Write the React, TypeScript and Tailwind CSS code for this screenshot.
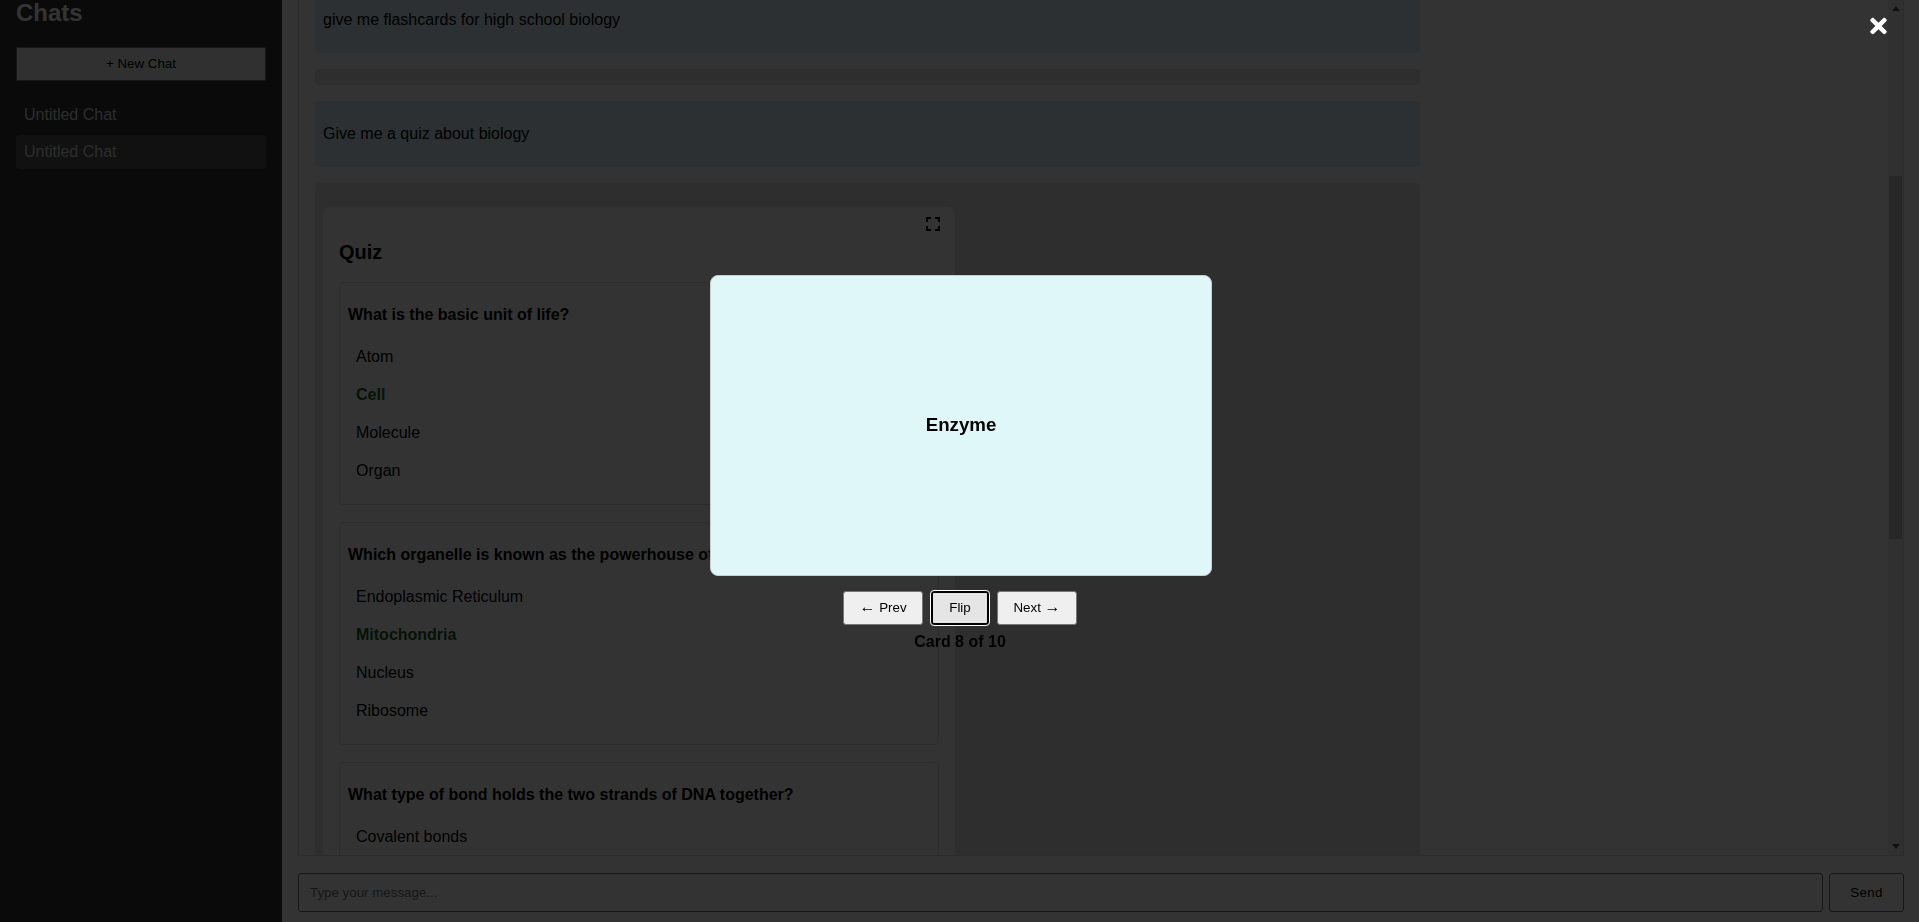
import { FaTimes } from "react-icons/fa";

interface Question {
  text: string;
  options: string[];
  answer: string;
}

const questions: Question[] = [
  {
    text: "What is the basic unit of life?",
    options: ["Atom", "Cell", "Molecule", "Organ"],
    answer: "Cell",
  },
  {
    text: "Which organelle is known as the powerhouse of the cell?",
    options: ["Endoplasmic Reticulum", "Mitochondria", "Nucleus", "Ribosome"],
    answer: "Mitochondria",
  },
  {
    text: "What type of bond holds the two strands of DNA together?",
    options: ["Covalent bonds"],
    answer: "",
  },
];

export default function App() {
  return (
    <div className="relative flex h-[922px] w-full overflow-hidden bg-white font-['Liberation_Sans',Arial,sans-serif] text-black">
      <Sidebar />
      <main className="flex min-w-0 flex-1 flex-col pr-[15px] pl-4">
        <Messages />
        <form className="mt-[17px] flex h-[39px] gap-[6px]">
          <input
            className="h-full flex-1 rounded-[3px] border border-[#767676] bg-white px-[11px] text-[13.33px] placeholder:text-[#757575]"
            placeholder="Type your message..."
            type="text"
          />
          <button
            type="button"
            className="h-full w-[75px] rounded-[3px] border border-[#767676] bg-white text-[13.33px] tracking-[0.4px]"
          >
            Send
          </button>
        </form>
      </main>
      <FlashcardModal />
    </div>
  );
}

function Sidebar() {
  return (
    <aside className="flex w-[282px] shrink-0 flex-col bg-[#333] px-4 text-white">
      <h2 className="-mt-[1px] h-[27px] text-2xl leading-[27px] font-bold">Chats</h2>
      <button
        type="button"
        className="mt-[21px] h-[34px] w-[250px] rounded-[1px] border border-[#767676] bg-[#efefef] text-[13.33px] text-black"
      >
        + New Chat
      </button>
      <div className="mt-[17px] flex h-[34px] items-center rounded-[4px] px-2 text-base text-[#ddd]">
        Untitled Chat
      </div>
      <div className="mt-[3px] flex h-[34px] items-center rounded-[4px] bg-[#555] px-2 text-base text-[#ddd]">
        Untitled Chat
      </div>
    </aside>
  );
}

function Messages() {
  return (
    <div className="flex h-[856px] border-r border-b border-l border-[#ddd]">
      <div className="min-w-0 flex-1 overflow-hidden pl-4">
        <div className="-mt-[13px] flex h-[66px] w-[1105px] items-center rounded-[4px] bg-[#d9f1f7] px-2 text-base leading-[18px]">
          give me flashcards for high school biology
        </div>
        <div className="mt-[16px] h-[16px] w-[1105px] rounded-[4px] bg-[#e6e6e6]" />
        <div className="mt-[16px] flex h-[66px] w-[1105px] items-center rounded-[4px] bg-[#d9f1f7] px-2 text-base leading-[18px]">
          Give me a quiz about biology
        </div>
        <div className="mt-[16px] w-[1105px] rounded-[4px] bg-[#e6e6e6] px-2 pt-[24px]">
          <QuizCard />
        </div>
      </div>
      <Scrollbar />
    </div>
  );
}

function QuizCard() {
  return (
    <div className="relative w-[632px] rounded-[8px] bg-white px-4 pt-[36px] pb-4">
      <button type="button" className="absolute top-[10px] right-[15px]">
        <ExpandIcon />
      </button>
      <h3 className="text-[20px] leading-[18px] font-bold">Quiz</h3>
      <div className="mt-[21px] flex flex-col gap-[17px]">
        {questions.map((question) => (
          <QuestionBlock key={question.text} question={question} />
        ))}
      </div>
    </div>
  );
}

function ExpandIcon() {
  return (
    <svg className="h-[14px] w-[14px]" viewBox="0 0 14 14" fill="none" stroke="#000" strokeWidth="2">
      <path d="M1 5V1H5M9 1H13V5M13 9V13H9M5 13H1V9" />
    </svg>
  );
}

function QuestionBlock({ question }: { question: Question }) {
  return (
    <div className="h-[223px] w-[600px] shrink-0 rounded-[4px] border border-[#ddd] px-2 pt-[23px]">
      <p className="text-base leading-[18px] font-bold">{question.text}</p>
      <ul className="mt-[14px] flex flex-col">
        {question.options.map((option) => (
          <li
            key={option}
            className={
              option === question.answer
                ? "flex h-[38px] items-center pl-2 text-base font-bold text-[#1b5e20]"
                : "flex h-[38px] items-center pl-2 text-base"
            }
          >
            {option}
          </li>
        ))}
      </ul>
    </div>
  );
}

function Scrollbar() {
  return (
    <div className="flex w-[15px] shrink-0 flex-col items-center bg-[#f1f1f1]">
      <svg className="mt-[6px] h-[5px] w-[8px]" viewBox="0 0 8 5">
        <path d="M4 0 8 5H0z" fill="#505050" />
      </svg>
      <div className="mt-[165px] h-[363px] w-[13px] bg-[#c1c1c1]" />
      <div className="flex-1" />
      <svg className="mb-[6px] h-[5px] w-[8px]" viewBox="0 0 8 5">
        <path d="M0 0H8L4 5z" fill="#505050" />
      </svg>
    </div>
  );
}

function FlashcardModal() {
  return (
    <div className="fixed inset-0 flex flex-col items-center bg-black/80 pt-[275px] pl-[1px]">
      <button
        type="button"
        className="absolute top-[14px] right-[32px] text-white"
      >
        <FaTimes className="h-[24px] w-[17px]" />
      </button>
      <div className="ml-[2px] flex h-[301px] w-[502px] items-center justify-center rounded-[8px] border border-[#ccc] bg-[#e0f7fa]">
        <h3 className="text-[18.72px] font-bold">Enzyme</h3>
      </div>
      <div className="mt-[15px] flex gap-2">
        <button
          type="button"
          className="h-[34px] w-[80px] rounded-[3px] border border-[#767676] bg-[#efefef] text-[13.33px]"
        >
          <span className="text-[16px] leading-none">←</span> Prev
        </button>
        <button
          type="button"
          className="h-[34px] w-[58px] rounded-[3px] border-2 border-black bg-[#e5e5e5] text-[13.33px] outline-1 outline-white"
        >
          Flip
        </button>
        <button
          type="button"
          className="h-[34px] w-[80px] rounded-[3px] border border-[#767676] bg-[#efefef] text-[13.33px]"
        >
          Next <span className="text-[16px] leading-none">→</span>
        </button>
      </div>
      <div className="mt-[8px] text-base leading-[18px] font-bold">Card 8 of 10</div>
    </div>
  );
}
